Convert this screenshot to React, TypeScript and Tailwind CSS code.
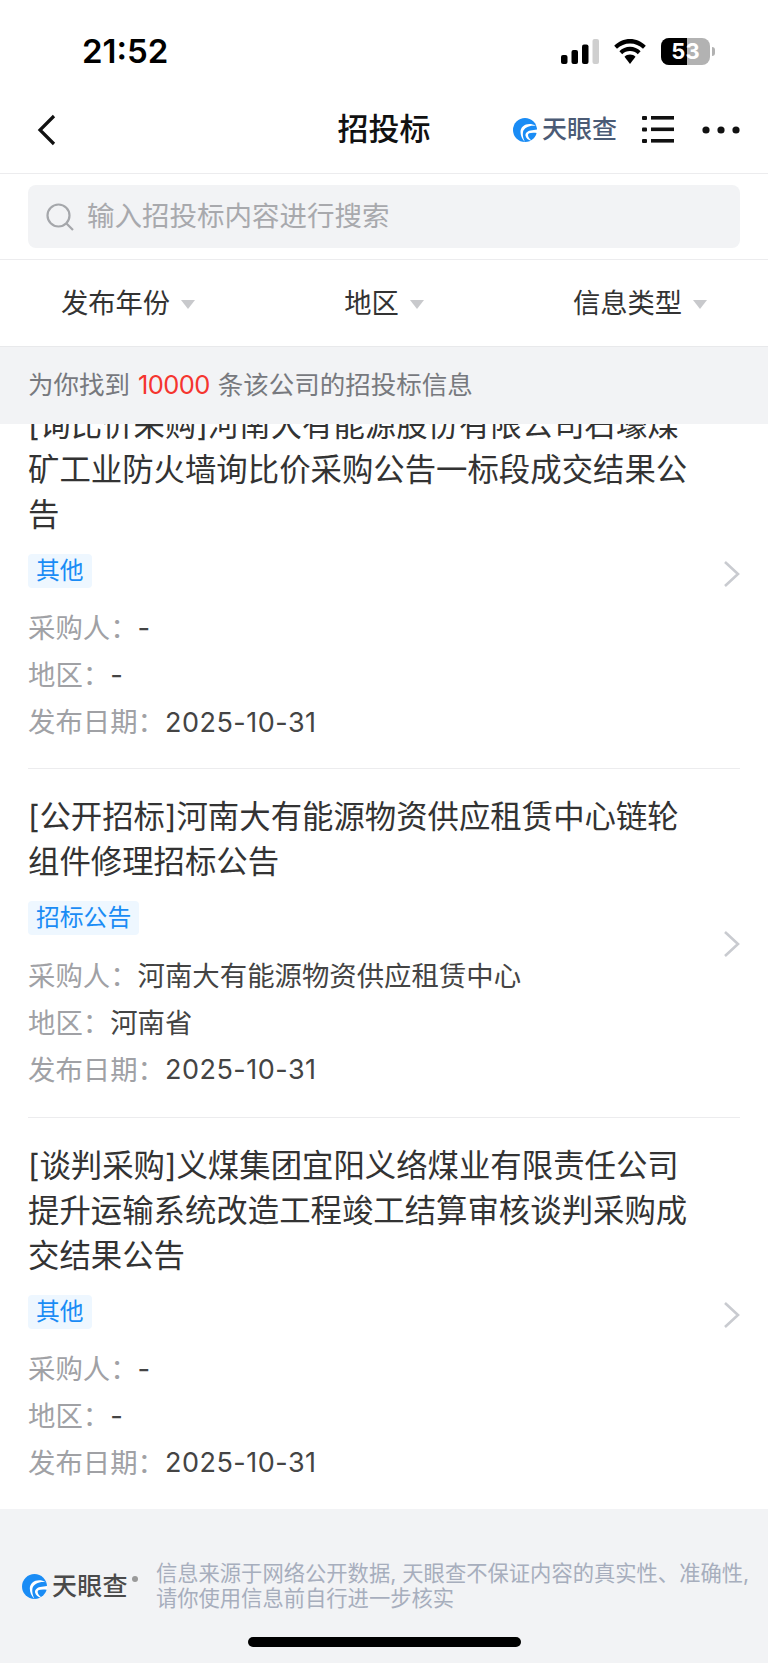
import React from "react";

function Swirl({ size }: { size: number }) {
  return (
    <svg width={size} height={size} viewBox="0 0 24 24" fill="none" className="shrink-0">
      <circle cx="12" cy="12" r="12" fill="#1a8cf5" />
      <path d="M23 8C16 3.5 7.5 7 7.5 14C7.5 17.5 9 21 12 24C10 20 9.5 17 10 14C11 9.5 17 7 23 8Z" fill="#ffffff" />
      <path d="M24 11.5L17.5 12.5C14 13.2 12 15.5 12.6 18C13.2 20.5 15.5 22.5 19 22.8C16.5 21 15 19 15 17C15 15.2 17.5 14.4 24 15Z" fill="#ffffff" />
    </svg>
  );
}

function Row({ label, value, date }: { label: string; value: string; date?: boolean }) {
  return (
    <div className="flex h-[47px] items-center text-[27.4px]">
      <span className="text-[#a0a1a5]">{label}</span>
      <span className={date ? "text-[27px] tracking-[0.5px] text-[#444]" : "text-[#444]"}>{value}</span>
    </div>
  );
}

function Item({ title, tag, buyer, region, first, last }: { title: string; tag: string; buyer: string; region: string; first?: boolean; last?: boolean }) {
  return (
    <div className={last ? "flex items-center pt-[26px] pb-[23px]" : first ? "flex items-center border-b border-[#ececee] pt-[26px] pb-[21.5px]" : "flex items-center border-b border-[#ececee] pt-[26px] pb-[23px]"}>
      <div className="min-w-0 flex-1">
        <div className="mr-[31px] text-[31.4px] leading-[45px] text-[#333]">{title}</div>
        <div className="mt-[16px] flex">
          <span className="flex h-[34px] items-center rounded-[4px] bg-[#eef7ff] px-[8px] text-[23.8px] text-[#1a8cf5]">{tag}</span>
        </div>
        <div className={last ? "mt-[17px]" : "mt-[18px]"}>
          <Row label="采购人：" value={buyer} />
          <Row label="地区：" value={region} />
          <Row label="发布日期：" value="2025-10-31" date />
        </div>
      </div>
      <svg width="17" height="28" viewBox="0 0 17 28" fill="none" className="mb-[2px] shrink-0">
        <path d="M2 2L15 14L2 26" stroke="#c9cbd0" strokeWidth="2.6" />
      </svg>
    </div>
  );
}

function Filter({ label }: { label: string }) {
  return (
    <div className="flex items-center justify-center gap-[11px] pt-[2px]">
      <span className="text-[27.3px] text-[#333]">{label}</span>
      <svg width="14" height="9" viewBox="0 0 14 9" className="shrink-0">
        <path d="M0 0H14L7 9Z" fill="#c8c9cc" />
      </svg>
    </div>
  );
}

export default function App() {
  return (
    <div
      className="relative flex h-[1663px] w-[768px] flex-col overflow-hidden bg-white"
      style={{ fontFamily: 'Inter, "Noto Sans CJK SC", sans-serif' }}
    >
      {/* status bar */}
      <div className="flex h-[86px] shrink-0 items-center justify-between pt-[16px] pl-[82px] pr-[53px]">
        <span className="pt-[2px] text-[33px] font-semibold text-black">21:52</span>
        <div className="flex items-center">
          <svg width="38" height="25" viewBox="0 0 38 25" className="shrink-0">
            <rect x="0" y="16" width="6.5" height="9" rx="2" fill="#000" />
            <rect x="10.5" y="11" width="6.5" height="14" rx="2" fill="#000" />
            <rect x="21" y="5.5" width="6.5" height="19.5" rx="2" fill="#000" />
            <rect x="31.5" y="0" width="6.5" height="25" rx="2" fill="#cfcfcf" />
          </svg>
          <svg width="32" height="25" viewBox="0 0 32 25" className="ml-[15px] shrink-0">
            <path d="M16 4.5C21 4.5 25.5 6.5 29 9.8L31.8 6.8C27.6 2.6 22 0 16 0S4.4 2.6 .2 6.8L3 9.8C6.5 6.5 11 4.5 16 4.5Z" fill="#000" />
            <path d="M16 12C19 12 21.7 13.2 23.8 15.2L26.6 12.2C23.8 9.4 20 7.8 16 7.8S8.2 9.4 5.4 12.2L8.2 15.2C10.3 13.2 13 12 16 12Z" fill="#000" />
            <path d="M16 15.5C13.8 15.5 11.9 16.4 10.5 17.8L16 25L21.5 17.8C20.1 16.4 18.2 15.5 16 15.5Z" fill="#000" />
          </svg>
          <div className="relative ml-[15px] flex h-[27px] w-[49px] overflow-hidden rounded-[8px] bg-[#b2b2b2]">
            <div className="h-full w-[26px] bg-black" />
            <span className="absolute inset-0 flex items-center justify-center text-[22px] font-bold leading-none text-white">53</span>
          </div>
          <div className="ml-[2px] h-[9px] w-[3px] rounded-r-full bg-[#b2b2b2]" />
        </div>
      </div>

      {/* nav */}
      <div className="grid h-[88px] shrink-0 grid-cols-[1fr_auto_1fr] items-center border-b border-[#ececee] px-[28px]">
        <svg width="20" height="32" viewBox="0 0 20 32" fill="none" className="ml-[9px]">
          <path d="M17 2L3 16L17 30" stroke="#111" strokeWidth="3.2" />
        </svg>
        <span className="text-[31px] font-medium text-[#111]">招投标</span>
        <div className="flex items-center justify-end">
          <Swirl size={24} />
          <span className="ml-[5px] text-[25px] font-medium leading-none text-[#4b5b75]">天眼查</span>
          <svg width="32" height="27" viewBox="0 0 32 27" className="ml-[25px] shrink-0">
            <rect x="0" y="0" width="5" height="4" rx="1" fill="#111" />
            <rect x="9" y="0" width="23" height="3.6" fill="#111" />
            <rect x="0" y="11.5" width="5" height="4" rx="1" fill="#111" />
            <rect x="9" y="11.5" width="23" height="3.6" fill="#111" />
            <rect x="0" y="23" width="5" height="4" rx="1" fill="#111" />
            <rect x="9" y="23" width="23" height="3.6" fill="#111" />
          </svg>
          <svg width="38" height="8" viewBox="0 0 38 8" className="ml-[28px] shrink-0">
            <circle cx="4" cy="4" r="3.6" fill="#111" />
            <circle cx="19" cy="4" r="3.6" fill="#111" />
            <circle cx="34" cy="4" r="3.6" fill="#111" />
          </svg>
        </div>
      </div>

      {/* search */}
      <div className="h-[86px] shrink-0 border-b border-[#ececee] px-[28px] pt-[11px]">
        <div className="flex h-[63px] items-center rounded-[8px] bg-[#f2f3f5] pl-[18px]">
          <svg width="28" height="28" viewBox="0 0 28 28" fill="none" className="shrink-0">
            <circle cx="12.5" cy="12.5" r="11" stroke="#a5a7ab" strokeWidth="2.2" />
            <path d="M20.5 20.5L27 27" stroke="#a5a7ab" strokeWidth="2.2" />
          </svg>
          <span className="ml-[13px] pt-[1px] text-[27.5px] text-[#a8a9ad]">输入招投标内容进行搜索</span>
        </div>
      </div>

      {/* filters */}
      <div className="grid h-[86px] shrink-0 grid-cols-3 items-center">
        <Filter label="发布年份" />
        <Filter label="地区" />
        <Filter label="信息类型" />
      </div>

      {/* count */}
      <div className="flex h-[78px] shrink-0 items-center border-t border-[#e8e9eb] bg-[#f2f3f5] pl-[28px] text-[25.5px] text-[#77797e]">
        为你找到<span className="mx-[8px] tracking-[-0.6px] text-[#f5352f]">10000</span>条该公司的招投标信息
      </div>

      {/* list */}
      <div className="min-h-0 flex-1 overflow-hidden px-[28px]">
        <div className="-mt-[47.5px]">
          <Item first title="[询比价采购]河南大有能源股份有限公司石壕煤矿工业防火墙询比价采购公告一标段成交结果公告" tag="其他" buyer="-" region="-" />
          <Item title="[公开招标]河南大有能源物资供应租赁中心链轮组件修理招标公告" tag="招标公告" buyer="河南大有能源物资供应租赁中心" region="河南省" />
          <Item title="[谈判采购]义煤集团宜阳义络煤业有限责任公司提升运输系统改造工程竣工结算审核谈判采购成交结果公告" tag="其他" buyer="-" region="-" last />
        </div>
      </div>

      {/* footer */}
      <div className="h-[154px] shrink-0 bg-[#f2f3f5] pl-[22px] pt-[52px]">
        <div className="flex h-[50px] items-center">
          <Swirl size={25} />
          <span className="ml-[5px] text-[25px] font-medium leading-none tracking-[0.3px] text-[#4a4a4a]">天眼查</span>
          <span className="ml-[4px] mb-[14px] h-[6px] w-[6px] rounded-full bg-[#9a9a9a]" />
          <div className="ml-[18px] whitespace-nowrap text-[21.3px] leading-[25px] text-[#a7aebd]">
            信息来源于网络公开数据, 天眼查不保证内容的真实性、准确性,
            <br />
            请你使用信息前自行进一步核实
          </div>
        </div>
      </div>

      <div className="absolute bottom-[16px] left-[248px] h-[10px] w-[273px] rounded-full bg-black" />
    </div>
  );
}
